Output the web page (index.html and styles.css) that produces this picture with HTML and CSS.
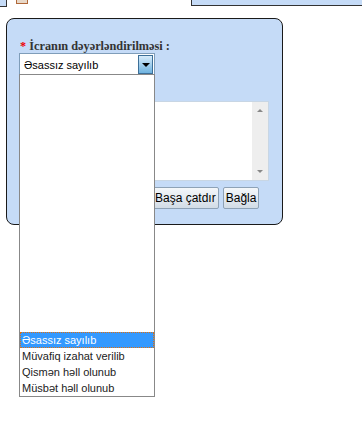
FILE: index.html
```
<!DOCTYPE html>
<html>
<head>
	<meta charset="utf-8">
	<title>İcra</title>
	<link rel="stylesheet" href="styles.css">
</head>
<body>
	<div class="topbar">
		<div class="tab-left"></div>
		<div class="tab-icon"></div>
		<div class="tab-right"></div>
	</div>

	<div class="panel">
		<label class="field-label" for="status"><span class="req">*</span> İcranın dəyərləndirilməsi :</label>
		<div class="select">
			<span class="select-value">Əsassız sayılıb</span>
			<span class="select-arrow"></span>
		</div>
		<div class="textarea">
			<div class="scroll">
				<span class="scroll-up"></span>
				<span class="scroll-down"></span>
			</div>
		</div>
		<div class="buttons">
			<button type="button">Başa çatdır</button>
			<button type="button">Bağla</button>
		</div>
	</div>

	<!-- açılmış siyahı -->
	<ul class="dropdown">
		<li class="active">Əsassız sayılıb</li>
		<li>Müvafiq izahat verilib</li>
		<li>Qismən həll olunub</li>
		<li>Müsbət həll olunub</li>
	</ul>
</body>
</html>
```

FILE: styles.css
```
body{
	margin: 0;
	background-color: #ffffff;
	font-family: "Liberation Sans", Arial, sans-serif;
	font-size: 11px;
	color: #000;
	position: relative;
	width: 362px;
	height: 444px;
	overflow: hidden;
}

.topbar{
	display: flex;
	height: 18px;
	align-items: flex-start;
}
.tab-left{
	width: 6px;
	height: 6px;
	background-color: #c5dbf7;
	border-right: 1px solid #333;
	border-bottom: 1px solid #333;
}
.tab-icon{
	width: 10px;
	height: 3px;
	margin-left: 9px;
	background-color: #e8d8c8;
	border: 1px solid #b0683a;
	border-top: none;
}
.tab-right{
	width: 170px;
	height: 5px;
	margin-left: auto;
	background-color: #c5dbf7;
	border-left: 1px solid #333;
	border-bottom: 1px solid #333;
}

.panel{
	margin-left: 6px;
	width: 275px;
	height: 205px;
	background-color: #c5dbf7;
	border: 1px solid #1a1a1a;
	border-radius: 8px;
	display: flex;
	flex-direction: column;
}

.field-label{
	margin: 21px 0 0 13px;
	font-family: "Liberation Serif", "Times New Roman", serif;
	font-weight: bold;
	font-size: 12.3px;
	line-height: 13px;
	color: #333;
}
.req{
	color: #e00;
}

.select{
	margin: 0 0 0 12px;
	width: 134px;
	height: 21px;
	background-color: #fff;
	border: 1px solid #7f9db9;
	display: flex;
	align-items: center;
}
.select-value{
	flex: 1;
	padding-left: 4px;
}
.select-arrow{
	width: 15px;
	height: 19px;
	margin-right: 1px;
	border: 1px solid #3d6f98;
	box-sizing: border-box;
	background: linear-gradient(#d7ebfa, #6fb3e0);
	position: relative;
}
.select-arrow::after{
	content: "";
	position: absolute;
	left: 3px;
	top: 7px;
	border-left: 4px solid transparent;
	border-right: 4px solid transparent;
	border-top: 4px solid #000;
}

.textarea{
	margin: 25px 0 0 12px;
	width: 248px;
	height: 78px;
	background-color: #fff;
	border: 1px solid #c8d6e4;
	display: flex;
	justify-content: flex-end;
}
.scroll{
	width: 16px;
	background-color: #eeeeee;
	display: flex;
	flex-direction: column;
	justify-content: space-between;
	align-items: center;
	padding: 7px 0 7px;
}
.scroll-up{
	border-left: 3px solid transparent;
	border-right: 3px solid transparent;
	border-bottom: 3px solid #888;
}
.scroll-down{
	border-left: 3px solid transparent;
	border-right: 3px solid transparent;
	border-top: 3px solid #888;
}

.buttons{
	display: flex;
	gap: 4px;
	margin: 6px 0 0 145px;
}
button{
	font-family: "Liberation Sans", Arial, sans-serif;
	font-size: 12px;
	height: 22px;
	padding: 0 2px;
	color: #000;
	background: linear-gradient(#f4f7fa, #d2dce6);
	border: 1px solid #8ea2b6;
	border-radius: 2px;
}

.dropdown{
	position: absolute;
	left: 19px;
	top: 74px;
	width: 134px;
	height: 321px;
	margin: 0;
	padding: 0;
	list-style: none;
	background-color: #fff;
	border: 1px solid #888;
	display: flex;
	flex-direction: column;
	justify-content: flex-end;
}
.dropdown li{
	height: 16px;
	line-height: 16px;
	padding-left: 2px;
	color: #222;
}
.dropdown li.active{
	background-color: #3399ff;
	color: #fff;
	outline: 1px dotted #e07010;
	outline-offset: -1px;
}
```
